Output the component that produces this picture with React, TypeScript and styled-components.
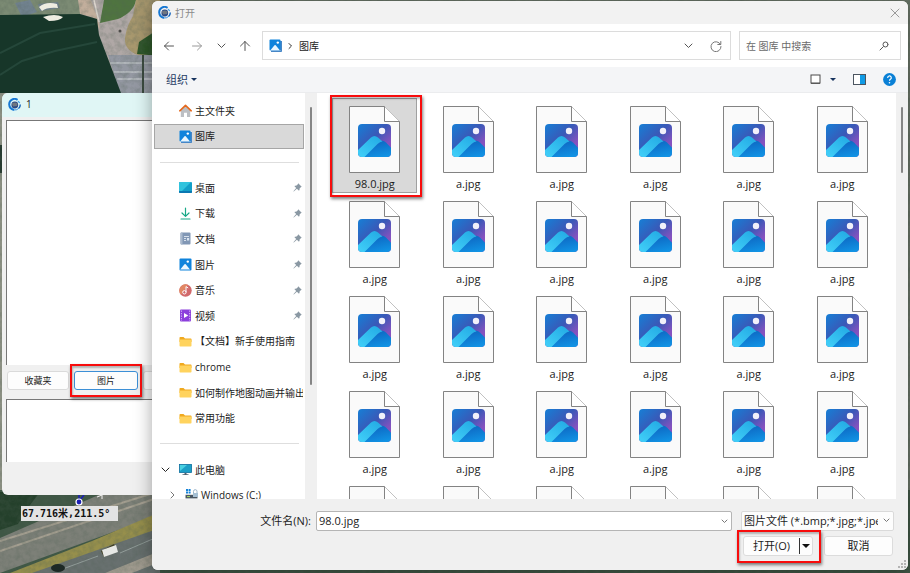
import React from "react";
import styled, { createGlobalStyle, css } from "styled-components";

const GlobalStyle = createGlobalStyle`
  *, *::before, *::after { box-sizing: border-box; }
  html, body, #root { height: 100%; margin: 0; }
  body, button, input, select {
    font-family: "Open Sans", "Noto Sans CJK SC", sans-serif;
    font-size: 10px;
    line-height: 16px;
    color: #1b1b1b;
  }
  button { padding: 0; border: 0; background: none; }
  svg { display: block; flex: none; }
`;

/* ---------- layout ---------- */

const Desktop = styled.main`
  position: relative;
  min-height: 100vh;
  overflow: hidden;
  background: #47544a;
`;

const MapCanvas = styled.svg`
  position: absolute;
  inset: 0;
  width: 100%;
  height: 100%;
`;

const Measure = styled.output`
  position: absolute;
  left: 21px;
  top: 506px;
  padding: 0 8px 0 1px;
  background: #e3e3e3;
  font-family: "DejaVu Sans Mono", "Noto Sans CJK SC", monospace;
  font-size: 10px;
  line-height: 15px;
  font-weight: 700;
  color: #111;
  white-space: nowrap;
`;

const windowFrame = css`
  position: absolute;
  display: flex;
  flex-direction: column;
  overflow: hidden;
  background: #f0f0f0;
`;

const RearWindow = styled.section`
  ${windowFrame}
  left: 2px;
  top: 93px;
  bottom: 78px;
  width: 40%;
  padding-bottom: 33px;
  border-radius: 6px;
`;

const RearTitle = styled.header`
  display: flex;
  align-items: center;
  gap: 5px;
  height: 24px;
  margin-bottom: 3px;
  padding: 0 0 2px 6px;
  background: #e0f6f5;
`;

const ListBox = styled.div<{ $grow?: boolean }>`
  ${(p) => (p.$grow ? "flex: 1;" : "height: 63px;")}
  margin-left: 4px;
  border-left: 1px solid #777;
  border-top: 1px solid #777;
  background: #fff;
`;

const RearButtons = styled.div`
  display: flex;
  gap: 5px;
  padding: 6px 0 9px 5px;
`;

const RearButton = styled.button<{ $focused?: boolean }>`
  width: ${(p) => (p.$focused ? 64 : 62)}px;
  height: 19px;
  border: 1px solid ${(p) => (p.$focused ? "#3c8fd6" : "#dadada")};
  border-radius: 3px;
  background: #fdfdfd;
  font-size: 9px;
`;

const Highlight = styled.span<{ $inset: string }>`
  position: relative;
  display: flex;
  &::after {
    content: "";
    position: absolute;
    inset: ${(p) => p.$inset};
    border: 2px solid #f80c0c;
    box-shadow: 1px 2px 3px rgba(0, 0, 0, 0.5), inset 1px 2px 2px rgba(0, 0, 0, 0.25);
    pointer-events: none;
  }
`;

const Dialog = styled.section`
  ${windowFrame}
  inset: 1px 2px 3px 152px;
  border-radius: 6px;
  box-shadow: 0 2px 18px rgba(0, 0, 0, 0.35);
`;

const DialogTitle = styled.header`
  display: flex;
  align-items: center;
  gap: 4px;
  height: 23px;
  padding: 0 8px 0 6px;
  background: #f2f2f2;
  color: #8a8a8a;
  button { margin-left: auto; }
`;

const NavRow = styled.div`
  display: flex;
  align-items: center;
  height: 43px;
  padding: 0 7px 0 11px;
  background: #fff;
`;

const NavButtons = styled.div`
  display: grid;
  grid-template-columns: 28px 26px 22px 23px;
  align-items: center;
`;

const boxed = css`
  display: flex;
  align-items: center;
  height: 29px;
  border: 1px solid #dcdcdc;
  background: #fff;
`;

const AddressBar = styled.div`
  ${boxed}
  flex: 1;
  gap: 6px;
  padding: 0 8px 0 6px;
`;

const Crumb = styled.button`
  margin-right: auto;
`;

const IconPair = styled.span`
  display: flex;
  align-items: center;
  gap: 17px;
`;

const SearchBox = styled.label`
  ${boxed}
  width: 162px;
  margin-left: 8px;
  padding: 0 11px 0 6px;
  input {
    flex: 1;
    min-width: 0;
    border: 0;
    outline: 0;
    padding: 0;
    background: none;
  }
  input::placeholder { color: #6b6b6b; opacity: 1; }
`;

const Toolbar = styled.div`
  display: flex;
  align-items: center;
  height: 26px;
  padding: 0 12px 0 14px;
  background: #f4f5f7;
  border-bottom: 1px solid #ebecee;
`;

const OrganizeButton = styled.button`
  display: flex;
  align-items: center;
  gap: 3px;
  margin-right: auto;
  color: #1c3a63;
  font-size: 11px;
`;

const ToolbarIcons = styled.div`
  display: flex;
  align-items: center;
  gap: 17px;
`;

const ViewButton = styled.button`
  display: flex;
  align-items: center;
  gap: 9px;
`;

const Body = styled.div`
  display: flex;
  flex: 1;
  min-height: 0;
`;

const Sidebar = styled.nav`
  width: 153px;
  padding: 5px 1px 0 2px;
  background: #fff;
  overflow: hidden;
`;

const Tree = styled.ul`
  display: grid;
  grid-template-rows: repeat(16, minmax(0, 1fr));
  height: 410px;
  margin: 0;
  padding: 0;
  list-style: none;
`;

const TreeRow = styled.button<{ $selected?: boolean; $nested?: boolean }>`
  display: grid;
  grid-template-columns: ${(p) => (p.$nested ? "27px" : "21px")} 13px 1fr auto;
  column-gap: 3px;
  align-items: center;
  width: 100%;
  height: 100%;
  overflow: hidden;
  border: 1px solid ${(p) => (p.$selected ? "#a6a6a6" : "transparent")};
  background: ${(p) => (p.$selected ? "#d9d9d9" : "transparent")};
  text-align: left;
  white-space: nowrap;
  padding-right: 1px;
`;

const RowArrow = styled.span<{ $nested?: boolean }>`
  padding-left: ${(p) => (p.$nested ? 15 : 6)}px;
`;

const RowText = styled.span`
  min-width: 0;
`;

const TreeDivider = styled.li`
  align-self: center;
  height: 1px;
  margin: 0 5px 0 6px;
  background: #dedede;
`;

const ScrollTrack = styled.div<{ $thumb: number }>`
  width: 12px;
  padding: 14px 5px 0;
  background: #f0f0f0;
  &::before {
    content: "";
    display: block;
    height: ${(p) => p.$thumb}px;
    border-radius: 1px;
    background: #858585;
  }
`;

const FileGrid = styled.div`
  display: grid;
  flex: 1;
  grid-template-columns: repeat(auto-fill, minmax(90px, 1fr));
  grid-auto-rows: 95px;
  padding: 5px 7px 0 11px;
  background: #fff;
  overflow: hidden;
`;

const FileTile = styled.button<{ $selected?: boolean }>`
  display: flex;
  flex-direction: column;
  align-items: center;
  gap: 4px;
  width: 85px;
  height: 95px;
  margin: 0 auto;
  padding-top: 7px;
  border: 1px solid ${(p) => (p.$selected ? "#a0a0a0" : "transparent")};
  background: ${(p) => (p.$selected ? "#d9d9d9" : "transparent")};
  line-height: 14px;
  font-size: 11px;
`;

const Footer = styled.form`
  display: grid;
  grid-template-columns: 159px 1fr 153px;
  align-content: start;
  row-gap: 5px;
  height: 71px;
  padding: 12px 14px 0 0;
  background: #f0f0f0;
`;

const NameLabel = styled.label`
  line-height: 20px;
  text-align: right;
  font-size: 11px;
`;

const NameField = styled.div`
  display: flex;
  align-items: center;
  height: 20px;
  margin: 0 9px 0 5px;
  padding-right: 3px;
  border: 1px solid #b5b5b5;
  border-radius: 2px;
  background: #fff;
  input {
    flex: 1;
    min-width: 0;
    border: 0;
    outline: 0;
    padding: 0 2px;
    background: none;
    font-size: 11px;
  }
`;

const TypeField = styled.div`
  position: relative;
  height: 20px;
  select {
    width: 100%;
    height: 20px;
    padding: 0 15px 0 2px;
    border: 1px solid #dadada;
    border-radius: 2px;
    background: #fdfdfd;
    appearance: none;
    font-size: 11px;
  }
  svg {
    position: absolute;
    right: 4px;
    top: 7px;
    pointer-events: none;
  }
`;

const Actions = styled.div`
  grid-column: 3;
  display: flex;
  align-items: flex-start;
  justify-content: space-between;
  margin-right: 1px;
  padding-left: 2px;
`;

const actionBox = css`
  height: 20px;
  border: 1px solid #dcdcdc;
  border-radius: 3px;
  background: #fdfdfd;
`;

const OpenSplit = styled.div`
  ${actionBox}
  display: grid;
  grid-template-columns: 55px 13px;
  align-items: center;
  button { font-size: 11px; }
  button:last-child {
    display: grid;
    place-items: center;
    height: 16px;
    border-left: 1px solid #333;
  }
`;

const CancelButton = styled.button`
  ${actionBox}
  width: 69px;
  font-size: 11px;
`;

const Grip = styled.svg`
  position: absolute;
  right: 2px;
  bottom: 2px;
`;

/* ---------- icons ---------- */

const Logo = () => (
  <svg width="13" height="13" viewBox="0 0 13 13" aria-hidden="true">
    <circle cx="6.8" cy="7" r="3.4" fill="#2c4a86" />
    <path d="M3.8 5.6Q6.5 3.4 9.6 5.4L9 8L5 8.4Z" fill="#6f7680" />
    <path d="M9.6 1.8A5.4 5.4 0 0 0 1.2 6.4Q1.4 10.8 6 12" fill="none" stroke="#1678d3" strokeWidth="2" />
    <path d="M6 12Q9 12.4 11 10" fill="none" stroke="#3d93e0" strokeWidth="1" />
    <path d="M12.3 6.4Q12.3 8.6 10.8 10.2" fill="none" stroke="#1264bd" strokeWidth="1.4" />
    <path d="M10 3.2L11.8 5" stroke="#3fa2ea" strokeWidth="1.2" />
  </svg>
);

type StrokeProps = { d: string; w?: number; h?: number; color?: string; sw?: number };
const Stroke = ({ d, w = 12, h = 12, color = "#555", sw = 1 }: StrokeProps) => (
  <svg width={w} height={h} viewBox={`0 0 ${w} ${h}`} fill="none" stroke={color} strokeWidth={sw} strokeLinecap="round" strokeLinejoin="round" aria-hidden="true">
    <path d={d} />
  </svg>
);

const Chevron = ({ color = "#555" }: { color?: string }) => <Stroke w={9} h={6} d="M1 1L4.5 4.5L8 1" color={color} />;
const SmallChevron = () => <Stroke w={7} h={5} d="M1 1L3.5 3.5L6 1" color="#777" />;

const Caret = ({ w = 6, color = "#16335e" }: { w?: number; color?: string }) => (
  <svg width={w} height={w / 2} viewBox="0 0 6 3" aria-hidden="true">
    <path d="M0 0H6L3 3Z" fill={color} />
  </svg>
);

const Picture = ({ stacked }: { stacked?: boolean }) => (
  <svg width="13" height="13" viewBox="0 0 13 13" aria-hidden="true">
    {stacked && <path d="M2 2H13V11.5Q13 13 11.5 13H2Z" fill="#0a5fb4" />}
    {stacked && <path d="M12 1V12H1" fill="none" stroke="#fff" strokeWidth="0.5" />}
    <rect x="0.5" y="0.5" width={stacked ? 11 : 12} height={stacked ? 11 : 12} rx="1" fill="#0f83dc" />
    <path d="M1.2 11.5L5.5 6.2Q6.1 5.6 6.7 6.2L11 11.5Z" fill="#e9f6ff" />
    <circle cx="8.8" cy="3.6" r="1.2" fill="#fff" />
  </svg>
);

const Home = () => (
  <svg width="13" height="13" viewBox="0 0 13 13" aria-hidden="true">
    <path d="M1.8 6L6.5 2L11.2 6V13H8V8.8H5V13H1.8Z" fill="#bcbfc3" />
    <path d="M0.8 6.8L6.5 1.4L12.2 6.8" fill="none" stroke="#e5691e" strokeWidth="1.6" strokeLinecap="round" strokeLinejoin="round" />
  </svg>
);

const DesktopIcon = () => (
  <svg width="13" height="13" viewBox="0 0 13 13" aria-hidden="true">
    <rect y="1" width="13" height="11" rx="1" fill="#149fc8" />
    <path d="M0 2Q0 1 1 1H12L3 10H0Z" fill="#31c3dd" />
    <path d="M0 10H13V11Q13 12 12 12H1Q0 12 0 11Z" fill="#0b78b2" />
  </svg>
);

const Download = () => <Stroke w={13} h={13} d="M6.5 1V9M3 6L6.5 9.4L10 6M2 12H11" color="#18a887" sw={1.2} />;

const Document = () => (
  <svg width="13" height="13" viewBox="0 0 13 13" aria-hidden="true">
    <rect x="1.5" y="0.5" width="10" height="12" rx="1" fill="#8197b5" />
    <path d="M1.5 1.5Q1.5 0.5 2.5 0.5H3.5V12.5H2.5Q1.5 12.5 1.5 11.5Z" fill="#a9b9cd" />
    <path d="M5 4.5H10M5 6.5H7M5 8.5H7" stroke="#eef3f9" strokeWidth="0.8" />
    <rect x="8" y="6" width="2.2" height="2.5" fill="#dce7f2" />
  </svg>
);

const Music = () => (
  <svg width="13" height="13" viewBox="0 0 13 13" aria-hidden="true">
    <circle cx="6.5" cy="6.5" r="6.2" fill="#d1696b" />
    <path d="M0.5 5A6.2 6.2 0 0 1 9 0.8L2 10.8A6.2 6.2 0 0 1 0.5 5Z" fill="#e18763" />
    <circle cx="5.4" cy="8.3" r="1.7" fill="none" stroke="#fff" />
    <path d="M7 8.3V2.6L9.2 4" fill="none" stroke="#fff" />
  </svg>
);

const Video = () => (
  <svg width="13" height="13" viewBox="0 0 13 13" aria-hidden="true">
    <rect x="1" y="0.5" width="11" height="12" rx="1" fill="#8c3fdc" />
    <path d="M2.4 1.5V12M10.7 1.5V12" stroke="#d9bcf5" strokeWidth="1" strokeDasharray="1.3 1.2" />
    <path d="M5 4L9.2 6.5L5 9Z" fill="#fff" />
  </svg>
);

const Folder = () => (
  <svg width="13" height="13" viewBox="0 0 13 13" aria-hidden="true">
    <path d="M0.5 2.8Q0.5 2 1.3 2H4.5L6 3.4H11.7Q12.5 3.4 12.5 4.2V7H0.5Z" fill="#f0a91f" />
    <rect x="0.5" y="4.4" width="12" height="7.2" rx="0.8" fill="#ffd35e" />
  </svg>
);

const Computer = () => (
  <svg width="13" height="13" viewBox="0 0 13 13" aria-hidden="true">
    <rect x="0.5" y="1.5" width="12" height="8" fill="#1c9fc7" stroke="#0c6f9f" strokeWidth="0.8" />
    <path d="M1 2H8L1 8Z" fill="#49d1e2" />
    <path d="M5.5 10H7.5V11.2H9.5V12H3.5V11.2H5.5Z" fill="#4e6270" />
  </svg>
);

const Drive = () => (
  <svg width="13" height="13" viewBox="0 0 13 13" aria-hidden="true">
    <path d="M1 0H3V2H1ZM3.6 0H5.6V2H3.6ZM1 2.6H3V4.6H1ZM3.6 2.6H5.6V4.6H3.6Z" fill="#1583d8" />
    <path d="M8.5 4V2.4A1.7 1.7 0 0 1 12 2.4V4" fill="none" stroke="#9bb4c9" />
    <path d="M0.5 5.8H12.5V9.4H0.5Z" fill="#4a5662" />
    <rect x="8" y="4" width="5" height="4" fill="#a5bfd3" />
    <path d="M2 7.6H5" stroke="#a8e063" />
  </svg>
);

const Pin = () => (
  <svg width="9" height="9" viewBox="0 0 9 9" aria-hidden="true">
    <path d="M5.2 0.3L8.7 3.8L7.8 4.3L6.6 5.4Q6.8 6.8 6 7.7L3.9 5.8L0.8 8.6L0.4 8.2L3.2 5.1L1.3 3Q2.4 2.3 3.6 2.4L4.8 1.2Z" fill="#8a98a3" />
  </svg>
);

const HelpIcon = () => (
  <svg width="13" height="13" viewBox="0 0 13 13" aria-hidden="true">
    <circle cx="6.5" cy="6.5" r="6.4" fill="#0a80d6" />
    <path d="M4.7 5A1.8 1.8 0 1 1 7.4 6.3Q6.5 6.8 6.5 7.8" fill="none" stroke="#fff" strokeWidth="1.2" />
    <circle cx="6.5" cy="9.7" r="0.8" fill="#fff" />
  </svg>
);

const ImageFile = () => (
  <svg width="51" height="67" viewBox="0 0 51 67" aria-hidden="true">
    <path d="M0.5 0.5H35.5L50.5 15.5V66.5H0.5Z" fill="#fafafa" stroke="#838383" />
    <path d="M35.5 0.5V15.5H50.5" fill="#fff" stroke="#838383" />
    <g clipPath="url(#thumb-clip)">
      <rect x="9" y="18" width="33" height="33" fill="url(#thumb-sky)" />
      <path d="M24 42L31 35.500Q34 33.500 37 36.500L45 45V53H12Z" fill="url(#thumb-hill)" />
      <path d="M5 48L22 31.500Q25.500 28.500 29 31.500L33.500 35.500Q31 35.500 28.500 38L15 51.500H5Z" fill="url(#thumb-ridge)" />
    </g>
    <circle cx="33" cy="25" r="3.200" fill="#f1f0fa" />
  </svg>
);

const SharedDefs = () => (
  <defs>
    <clipPath id="thumb-clip">
      <rect x="9" y="18" width="33" height="33" rx="4" />
    </clipPath>
    <linearGradient id="thumb-sky" x1="0" y1="0" x2="1" y2="1">
      <stop offset="0" stopColor="#167fd6" />
      <stop offset="0.45" stopColor="#3a58b7" />
      <stop offset="0.75" stopColor="#8552bf" />
      <stop offset="1" stopColor="#8552bf" />
    </linearGradient>
    <linearGradient id="thumb-hill" x1="0" y1="0" x2="0.4" y2="1">
      <stop offset="0" stopColor="#0d5ebc" />
      <stop offset="1" stopColor="#1193e4" />
    </linearGradient>
    <linearGradient id="thumb-ridge" x1="1" y1="0" x2="0" y2="1">
      <stop offset="0" stopColor="#21a8e3" />
      <stop offset="1" stopColor="#45d4fb" />
    </linearGradient>
    <filter id="ground" x="0" y="0" width="100%" height="100%">
      <feTurbulence type="fractalNoise" baseFrequency="0.18" numOctaves="4" seed="7" />
      <feColorMatrix values="0 0 0 0 0.08  0 0 0 0 0.12  0 0 0 0 0.09  1.6 0 0 0 -0.55" />
    </filter>
  </defs>
);

/* Aerial view behind the windows. */
const AerialMap = () => (
  <MapCanvas viewBox="0 0 910 573" preserveAspectRatio="xMinYMin slice" aria-hidden="true">
    <SharedDefs />
    <rect width="910" height="573" fill="#6c776a" />
    <rect width="160" height="95" fill="#b0a8a6" />
    <path d="M0 0H80V15H0Z" fill="#7c8b74" />
    <path d="M15 3L30 0L37 12L22 17ZM38 4L58 2L60 8L40 11Z" fill="#71828f" />
    <path d="M104 0H136Q134 12 118 19L100 23Z" fill="#4f7440" />
    <path d="M136 0H160V56L138 55Q124 50 125 38Q127 25 133 16Z" fill="#a8986e" />
    <path d="M139 42L160 28V56L137 54Z" fill="#2c5527" />
    <path d="M108 55H160V93H120Z" fill="#9498a2" />
    <path d="M110 63H160M114 72H160M117 79H160" stroke="#bfc2c8" strokeWidth="1.5" />
    <path d="M143 55V93" stroke="#39483d" strokeWidth="2" />
    <path d="M78 0H91L99 22L100 30L92 17L80 14Z" fill="#c2ae9c" />
    <path d="M94 0L99 22" stroke="#ddd6ce" strokeWidth="1.5" />
    <circle cx="120" cy="31" r="1.5" fill="#4c4a48" />
    <rect y="93" width="4" height="403" fill="#8d9184" />
    <rect y="145" width="4" height="28" fill="#263a30" />
    <rect y="490" width="910" height="83" fill="#3f5745" />
    <path d="M0 538L62 511L110 490H160V515L0 573Z" fill="#7d8078" />
    <path d="M0 541L160 491M0 551L160 497" stroke="#a59f91" strokeWidth="2" />
    <path d="M20 573L160 516V573Z" fill="#68706f" />
    <path d="M10 573L92 541L160 512V528L32 573Z" fill="#968f4c" />
    <path d="M105 573L160 551V562L132 573Z" fill="#9f9a8e" />
    <path d="M60 570L98 556M120 553L155 538" stroke="#96a09e" />
    <path d="M0 492H40L30 505L18 524L0 530Z" fill="#24402b" />
    <rect width="910" height="573" filter="url(#ground)" opacity="0.35" />
    <path d="M0 15L80 14L97 19L99 35L121 93H0Z" fill="#173629" />
    <path d="M0 75L22 61L55 51L97 42M0 53L40 33L95 24" fill="none" stroke="#25473a" strokeWidth="2" />
    <path d="M39 7Q46 1 57 4L58 8Q47 7 42 11ZM43 17Q55 13 63 17Q60 21 49 21Z" fill="#eeece1" />
    <path d="M101 551L114 544L117 551L104 557Z" fill="#403f20" />
    <path d="M102 550L116 545L118 552L104 557Z" fill="#e6e8e5" />
    <ellipse cx="58" cy="568" rx="7" ry="4" fill="#1d2925" />
    <path d="M79 501V495M80 500L84 495" stroke="#1a1fb5" strokeWidth="1.5" />
    <circle cx="79" cy="502" r="3" fill="#1a1fb5" stroke="#fff" strokeWidth="1.2" />
    <path d="M97 497L102 495V499" fill="none" stroke="#f3f3f3" />
  </MapCanvas>
);

/* ---------- data ---------- */

type Item = { text: string; icon: React.ReactNode; pinned?: boolean; selected?: boolean; arrow?: "open" | "closed" };

const treeItems: (Item | null)[] = [
  { text: "主文件夹", icon: <Home /> },
  { text: "图库", icon: <Picture stacked />, selected: true },
  null,
  { text: "桌面", icon: <DesktopIcon />, pinned: true },
  { text: "下载", icon: <Download />, pinned: true },
  { text: "文档", icon: <Document />, pinned: true },
  { text: "图片", icon: <Picture />, pinned: true },
  { text: "音乐", icon: <Music />, pinned: true },
  { text: "视频", icon: <Video />, pinned: true },
  { text: "【文档】新手使用指南", icon: <Folder /> },
  { text: "chrome", icon: <Folder /> },
  { text: "如何制作地图动画并输出", icon: <Folder /> },
  { text: "常用功能", icon: <Folder /> },
  null,
  { text: "此电脑", icon: <Computer />, arrow: "open" },
  { text: "Windows (C:)", icon: <Drive />, arrow: "closed" },
];

const files = ["98.0.jpg", ...Array.from({ length: 29 }, () => "a.jpg")];

const TreeItem = ({ item }: { item: Item }) => {
  const nested = item.arrow === "closed";
  return (
    <li>
      <TreeRow type="button" $selected={item.selected} $nested={nested}>
        <RowArrow $nested={nested}>
          {item.arrow === "open" && <Chevron color="#222" />}
          {nested && <Stroke w={5} h={8} d="M1 1L4 4L1 7" color="#777" />}
        </RowArrow>
        {item.icon}
        <RowText>{item.text}</RowText>
        {item.pinned && <Pin />}
      </TreeRow>
    </li>
  );
};

export default function App() {
  return (
    <Desktop>
      <GlobalStyle />
      <AerialMap />
      <Measure>67.716米,211.5°</Measure>

      <RearWindow aria-label="1">
        <RearTitle>
          <Logo />
          1
        </RearTitle>
        <ListBox $grow />
        <RearButtons>
          <RearButton type="button">收藏夹</RearButton>
          <Highlight $inset="-7px -4px">
            <RearButton type="button" $focused>图片</RearButton>
          </Highlight>
          <RearButton type="button" aria-label="more" />
        </RearButtons>
        <ListBox />
      </RearWindow>

      <Dialog role="dialog" aria-label="打开">
        <DialogTitle>
          <Logo />
          打开
          <button type="button" aria-label="关闭">
            <Stroke w={10} h={10} d="M1 1L9 9M9 1L1 9" color="#999" />
          </button>
        </DialogTitle>

        <NavRow>
          <NavButtons>
            <button type="button" aria-label="后退"><Stroke d="M1.500 6H10.500M5.500 2L1.500 6L5.500 10" /></button>
            <button type="button" aria-label="前进"><Stroke d="M1.500 6H10.500M6.500 2L10.500 6L6.500 10" color="#999" /></button>
            <button type="button" aria-label="最近"><Chevron /></button>
            <button type="button" aria-label="上移"><Stroke d="M6 1.500V10.500M1.500 6L6 1.500L10.500 6" /></button>
          </NavButtons>
          <AddressBar>
            <Picture stacked />
            <Stroke w={5} h={8} d="M1 1.500L3.500 4L1 6.500" color="#333" />
            <Crumb type="button">图库</Crumb>
            <IconPair>
              <button type="button" aria-label="历史"><Chevron /></button>
              <button type="button" aria-label="刷新"><Stroke d="M10.500 4.500A5 5 0 1 0 11 6.500M10.800 1.500V4.500H7.800" color="#777" /></button>
            </IconPair>
          </AddressBar>
          <SearchBox>
            <input type="search" aria-label="搜索" placeholder="在 图库 中搜索" />
            <Stroke w={10} h={10} d="M4.200 5.800L1 9M9 3.500A2.500 2.500 0 1 1 4 3.500A2.500 2.500 0 1 1 9 3.500" />
          </SearchBox>
        </NavRow>

        <Toolbar>
          <OrganizeButton type="button">组织 <Caret /></OrganizeButton>
          <ToolbarIcons>
            <ViewButton type="button" aria-label="视图">
              <svg width="11" height="11" viewBox="0 0 11 11" aria-hidden="true">
                <rect x="1" y="1" width="9" height="8" fill="#fff" stroke="#4a4a4a" />
                <path d="M1 9.500H10" stroke="#5a5a5a" />
              </svg>
              <Caret w={6} />
            </ViewButton>
            <button type="button" aria-label="预览窗格">
              <svg width="13" height="11" viewBox="0 0 13 11" aria-hidden="true">
                <rect x="0.500" y="0.500" width="12" height="10" fill="#fff" stroke="#4b5560" />
                <rect x="7" y="1" width="5" height="9" fill="#109be6" />
              </svg>
            </button>
            <button type="button" aria-label="帮助"><HelpIcon /></button>
          </ToolbarIcons>
        </Toolbar>

        <Body>
          <Sidebar>
            <Tree>
              {treeItems.map((item, i) => (item ? <TreeItem key={i} item={item} /> : <TreeDivider key={i} />))}
            </Tree>
          </Sidebar>
          <ScrollTrack $thumb={278} />
          <FileGrid>
            {files.map((name, i) =>
              i === 0 ? (
                <Highlight key={i} $inset="-3px 0 -4px 2px">
                  <FileTile type="button" $selected><ImageFile />{name}</FileTile>
                </Highlight>
              ) : (
                <FileTile key={i} type="button"><ImageFile />{name}</FileTile>
              )
            )}
          </FileGrid>
          <ScrollTrack $thumb={66} />
        </Body>

        <Footer onSubmit={(e) => e.preventDefault()}>
          <NameLabel htmlFor="file-name">文件名(N):</NameLabel>
          <NameField>
            <input id="file-name" type="text" defaultValue="98.0.jpg" />
            <button type="button" aria-label="文件名列表"><SmallChevron /></button>
          </NameField>
          <TypeField>
            <select aria-label="文件类型">
              <option>图片文件 (*.bmp;*.jpg;*.jpeg)</option>
            </select>
            <SmallChevron />
          </TypeField>
          <Actions>
            <Highlight $inset="-6px -8px -7px -6px">
              <OpenSplit>
                <button type="submit">打开(O)</button>
                <button type="button" aria-label="打开选项"><Caret w={8} color="#111" /></button>
              </OpenSplit>
            </Highlight>
            <CancelButton type="button">取消</CancelButton>
          </Actions>
        </Footer>
        <Grip width="8" height="8" viewBox="0 0 8 8" aria-hidden="true">
          <path d="M6 0H8V2H6ZM3 3H5V5H3ZM6 3H8V5H6ZM0 6H2V8H0ZM3 6H5V8H3ZM6 6H8V8H6Z" fill="#b4b4b4" />
        </Grip>
      </Dialog>
    </Desktop>
  );
}
